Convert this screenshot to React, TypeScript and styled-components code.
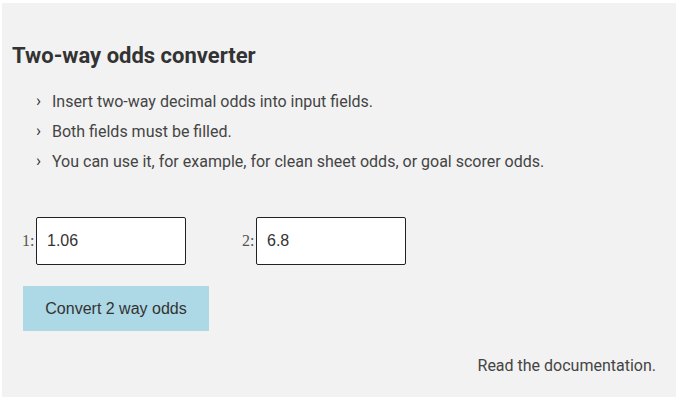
import React from 'react';
import styled, { createGlobalStyle } from 'styled-components';

const GlobalStyle = createGlobalStyle`
  body {
    margin: 0;
    background: #ffffff;
    font-family: Roboto, 'Liberation Sans', sans-serif;
  }
`;

const items = [
  'Insert two-way decimal odds into input fields.',
  'Both fields must be filled.',
  'You can use it, for example, for clean sheet odds, or goal scorer odds.',
];

const App: React.FC = () => {
  return (
    <Page>
      <GlobalStyle />
      <Panel>
        <Title>Two-way odds converter</Title>

        <List>
          {items.map((text) => (
            <Item key={text}>{text}</Item>
          ))}
        </List>

        <Fields>
          <Field>
            <Label>1:</Label>
            <Input defaultValue='1.06' />
          </Field>
          <Field>
            <Label>2:</Label>
            <Input defaultValue='6.8' />
          </Field>
        </Fields>

        <Button>Convert 2 way odds</Button>

        <DocLink>Read the documentation.</DocLink>
      </Panel>
    </Page>
  );
};

const Page = styled.div`
  padding: 3px 2px 5px 2px;
`;

const Panel = styled.div`
  background: #f2f2f2;
  height: 394px;
  box-sizing: border-box;
  padding: 40px 20px 0 10px;
  display: flex;
  flex-direction: column;
`;

const Title = styled.h2`
  margin: 0;
  font-size: 22px;
  line-height: 26px;
  font-weight: 700;
  color: #333333;
`;

const List = styled.ul`
  list-style: none;
  margin: 18px 0 0 0;
  padding: 0 0 0 24px;
`;

const Item = styled.li`
  position: relative;
  padding-left: 16px;
  font-size: 16px;
  line-height: 30px;
  color: #444444;

  &::before {
    content: '›';
    position: absolute;
    left: 0;
    top: -2px;
    font-size: 17px;
    color: #333333;
  }
`;

const Fields = styled.div`
  display: flex;
  gap: 56px;
  margin: 40px 0 0 10px;
`;

const Field = styled.label`
  display: flex;
  align-items: center;
`;

const Label = styled.span`
  font-family: 'Liberation Serif', serif;
  font-size: 16px;
  color: #555555;
  width: 14px;
`;

const Input = styled.input`
  box-sizing: border-box;
  width: 150px;
  height: 48px;
  border: 1px solid #222222;
  border-radius: 2px;
  background: #ffffff;
  padding: 0 10px;
  font-family: 'Liberation Sans', Arial, sans-serif;
  font-size: 16px;
  color: #333333;
  outline: none;
`;

const Button = styled.button`
  align-self: flex-start;
  margin: 21px 0 0 11px;
  width: 186px;
  height: 45px;
  border: none;
  background: #add8e6;
  font-family: 'Liberation Sans', Arial, sans-serif;
  font-size: 16px;
  color: #333333;
  cursor: pointer;
`;

const DocLink = styled.div`
  align-self: flex-end;
  margin-top: 25px;
  font-size: 16px;
  line-height: 19px;
  color: #444444;
`;

export default App;
